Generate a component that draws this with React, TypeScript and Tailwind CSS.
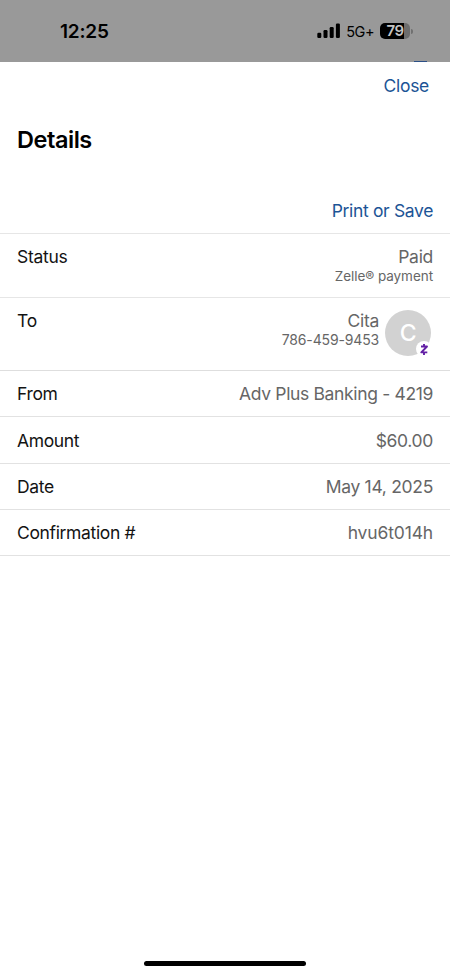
const rows = [
  { label: "From", value: "Adv Plus Banking - 4219", height: "h-[46px]", spacing: "tracking-[-0.35px]" },
  { label: "Amount", value: "$60.00", height: "h-[47px]", spacing: "tracking-[-0.35px]" },
  { label: "Date", value: "May 14, 2025", height: "h-[46px]", spacing: "tracking-[-0.3px]" },
  { label: "Confirmation #", value: "hvu6t014h", height: "h-[46px]", spacing: "tracking-[-0.15px]" },
];

function StatusBar() {
  return (
    <div className="relative flex h-[62px] items-center justify-between bg-[#999999] pl-[60px] pr-[37px] text-black">
      <span className="pt-px text-[19px] font-semibold leading-6 tracking-[-0.2px]">12:25</span>

      <div className="flex items-center">
        {/* Signal */}
        <svg width="24" height="16" viewBox="0 0 24 16" fill="currentColor">
          <rect x="0.3" y="9.7" width="4" height="5.3" rx="1.2" />
          <rect x="6.5" y="7" width="4" height="8" rx="1.2" />
          <rect x="12.7" y="4" width="4" height="11" rx="1.2" />
          <rect x="18.9" y="0.6" width="4" height="14.4" rx="1.2" />
        </svg>
        <span className="ml-[5px] pt-[2px] text-[14.5px] leading-5 tracking-[-0.5px]">5G+</span>

        {/* Battery */}
        <div className="ml-[6px] flex h-4 w-[30px] items-center justify-center rounded-[5px] bg-linear-to-r from-black from-79% to-[#6d6d6d] to-79%">
          <span className="text-[15px] font-semibold leading-4 tracking-[-0.5px] text-[#c4c4c4]">79</span>
        </div>
        <div className="ml-px h-[5px] w-[2px] rounded-r-full bg-[#707070]" />
      </div>

      {/* Edge of the page behind the sheet */}
      <div className="absolute bottom-0 left-[414px] h-px w-[13px] bg-[#2b4f86]" />
    </div>
  );
}

function Avatar() {
  return (
    <div className="relative mt-px flex h-[46px] w-[46px] items-center justify-center rounded-full bg-[#d2d2d2]">
      <span className="text-[23px] font-medium leading-7 text-white">C</span>
      <div className="absolute left-[31px] top-[31px] flex h-4 w-4 items-center justify-center rounded-full bg-white">
        <svg width="10" height="13" viewBox="0 0 10 13" fill="none" stroke="#6320a5" strokeWidth="1.9">
          <path d="M2 3.5H8L2.3 9.4H8.3" strokeLinejoin="round" />
          <path d="M5 1V3.5M5 9.4V12" />
        </svg>
      </div>
    </div>
  );
}

export default function App() {
  return (
    <div className="flex h-[975px] w-[450px] flex-col overflow-hidden bg-white font-['Inter',sans-serif] text-[17.5px] leading-6 tracking-[-0.3px] text-[#131313]">
      <StatusBar />

      {/* Sheet header */}
      <div className="flex h-[47px] justify-end pr-[21px] pt-3">
        <button className="h-6 text-[#1c5496]">Close</button>
      </div>
      <h1 className="h-[78px] pl-[17px] pt-[15px] text-[23.5px] font-semibold leading-8 tracking-[-0.45px] text-black">
        Details
      </h1>
      <div className="flex h-[47px] justify-end border-b border-[#e6e6e6] pr-[17px] pt-3">
        <button className="h-6 tracking-[-0.35px] text-[#1c5496]">Print or Save</button>
      </div>

      {/* Payment details */}
      <div className="flex h-16 justify-between border-b border-[#e6e6e6] px-[17px] pt-[11px]">
        <span>Status</span>
        <div className="text-right text-[#666666]">
          <div>Paid</div>
          <div className="text-[13.5px] leading-[15px] tracking-[-0.05px]">Zelle® payment</div>
        </div>
      </div>
      <div className="flex h-[73px] border-b border-[#dedede] pl-[17px] pr-[19px] pt-[11px]">
        <span className="flex-1">To</span>
        <div className="mr-[6px] text-right text-[#666666]">
          <div>Cita</div>
          <div className="text-[14px] leading-[13px] tracking-[-0.15px]">786-459-9453</div>
        </div>
        <Avatar />
      </div>
      {rows.map((row) => (
        <div
          key={row.label}
          className={`flex items-center justify-between border-b border-[#e2e2e2] px-[17px] pt-px ${row.height}`}
        >
          <span className="tracking-[-0.35px]">{row.label}</span>
          <span className={`text-[#666666] ${row.spacing}`}>{row.value}</span>
        </div>
      ))}

      {/* Home indicator */}
      <div className="mb-[9px] ml-[144px] mt-auto h-[5px] w-[162px] rounded-full bg-black" />
    </div>
  );
}
